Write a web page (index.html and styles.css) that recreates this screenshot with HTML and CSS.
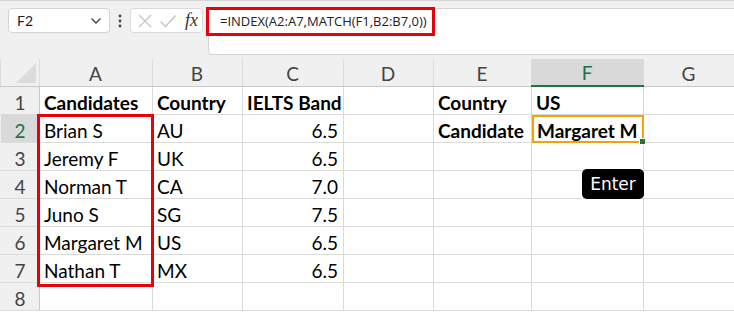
FILE: index.html
```html
<!DOCTYPE html>
<html>
<head>
  <title>INDEX MATCH</title>
  <link rel="stylesheet" href="styles.css">
</head>
<body>
  <div class="toolbar">
    <div class="name-box">
      <span>F2</span>
      <svg width="12" height="8" viewBox="0 0 12 8"><path d="M1.5 1.5 L6 6 L10.5 1.5" fill="none" stroke="#444" stroke-width="1.4"/></svg>
    </div>
    <div class="dots">
      <svg width="4" height="14" viewBox="0 0 4 14"><circle cx="2" cy="2" r="1.4" fill="#444"/><circle cx="2" cy="7" r="1.4" fill="#444"/><circle cx="2" cy="12" r="1.4" fill="#444"/></svg>
    </div>
    <div class="fx-box">
      <svg width="16" height="16" viewBox="0 0 16 16"><path d="M2 2 L14 14 M14 2 L2 14" stroke="#c4c4c4" stroke-width="1.3"/></svg>
      <svg width="18" height="16" viewBox="0 0 18 16"><path d="M1.5 8.5 L6.5 13.5 L16.5 2.5" fill="none" stroke="#c4c4c4" stroke-width="1.3"/></svg>
      <span class="fx">fx</span>
    </div>
    <div class="formula">
      <span class="formula-text">=INDEX(A2:A7,MATCH(F1,B2:B7,0))</span>
    </div>
  </div>

  <div class="sheet">
    <table class="grid">
      <colgroup>
        <col style="width:39px">
        <col style="width:113px">
        <col style="width:90px">
        <col style="width:101px">
        <col style="width:90px">
        <col style="width:98px">
        <col style="width:112px">
        <col style="width:91px">
      </colgroup>
      <tr class="col-head">
        <th class="corner"><div class="tri"></div></th>
        <th>A</th><th>B</th><th>C</th><th>D</th><th>E</th><th class="sel">F</th><th>G</th>
      </tr>
      <tr>
        <th class="row-head">1</th>
        <td class="b">Candidates</td><td class="b">Country</td><td class="b">IELTS Band</td><td></td>
        <td class="b">Country</td><td class="b">US</td><td></td>
      </tr>
      <tr>
        <th class="row-head sel">2</th>
        <td>Brian S</td><td>AU</td><td class="num">6.5</td><td></td>
        <td class="b">Candidate</td><td class="b active">Margaret M<span class="handle"></span></td><td></td>
      </tr>
      <tr>
        <th class="row-head">3</th>
        <td>Jeremy F</td><td>UK</td><td class="num">6.5</td><td></td><td></td><td></td><td></td>
      </tr>
      <tr>
        <th class="row-head">4</th>
        <td>Norman T</td><td>CA</td><td class="num">7.0</td><td></td><td></td><td></td><td></td>
      </tr>
      <tr>
        <th class="row-head">5</th>
        <td>Juno S</td><td>SG</td><td class="num">7.5</td><td></td><td></td><td></td><td></td>
      </tr>
      <tr>
        <th class="row-head">6</th>
        <td>Margaret M</td><td>US</td><td class="num">6.5</td><td></td><td></td><td></td><td></td>
      </tr>
      <tr>
        <th class="row-head">7</th>
        <td>Nathan T</td><td>MX</td><td class="num">6.5</td><td></td><td></td><td></td><td></td>
      </tr>
      <tr>
        <th class="row-head">8</th>
        <td></td><td></td><td></td><td></td><td></td><td></td><td></td>
      </tr>
    </table>
    <div class="range-mark"></div>
    <div class="enter-key">Enter</div>
  </div>
</body>
</html>
```

FILE: styles.css
```css
body {
  margin: 0;
  width: 734px;
  height: 314px;
  overflow: hidden;
  background: #ffffff;
  font-family: Lato, "Liberation Sans", sans-serif;
}

.toolbar {
  display: flex;
  align-items: flex-start;
  height: 59px;
  padding: 7px 0 0 8px;
  box-sizing: border-box;
  background: #f0f0f0;
  border-top: 1px solid #d6d6d6;
}

.name-box {
  display: flex;
  align-items: center;
  justify-content: space-between;
  width: 102px;
  height: 25px;
  padding: 0 7px 0 8px;
  box-sizing: border-box;
  background: #ffffff;
  border: 1px solid #d4d4d4;
  border-radius: 4px;
  font-size: 14px;
  color: #222;
}

.dots {
  width: 20px;
  height: 25px;
  display: flex;
  align-items: center;
  justify-content: center;
}

.fx-box {
  display: flex;
  align-items: center;
  gap: 6px;
  width: 73px;
  height: 25px;
  padding: 0 4px 0 6px;
  box-sizing: border-box;
  background: #ffffff;
  border: 1px solid #dadada;
  border-radius: 4px;
}

.fx {
  font-family: "Liberation Serif", serif;
  font-style: italic;
  font-size: 18px;
  color: #333;
  margin-left: 2px;
}

.formula {
  flex: 1;
  height: 45px;
  margin-left: 5px;
  background: #ffffff;
  border: 1px solid #d4d4d4;
  border-right: none;
  border-radius: 4px 0 0 4px;
  font-family: "Open Sans", sans-serif;
  font-size: 13px;
  color: #222;
}

.formula-text {
  display: inline-block;
  margin: -2px 0 0 -3px;
  padding: 2px 5px 3px 11px;
  border: 3px solid #e8000b;
}

.sheet {
  position: relative;
}

.grid {
  table-layout: fixed;
  border-collapse: collapse;
  width: 734px;
  font-size: 19px;
  line-height: 21px;
  color: #000;
}

.grid td,
.grid th {
  height: 26px;
  padding: 0 5px 1px 4px;
  border: 1px solid #dadada;
  vertical-align: bottom;
  white-space: nowrap;
  overflow: visible;
  text-align: left;
  font-weight: normal;
}

.grid .col-head th {
  height: 24px;
  background: #f0f0f0;
  color: #444;
  text-align: center;
  border-color: #f0f0f0 #dcdcdc #c8c8c8 #dcdcdc;
  border-top: none;
  padding-bottom: 2px;
}

.grid .col-head th.sel {
  background: #d9d9d9;
  color: #217346;
  border-bottom: 2px solid #217346;
}

.grid .corner {
  position: relative;
  padding: 0;
}

.tri {
  position: absolute;
  right: 3px;
  bottom: 3px;
  width: 0;
  height: 0;
  border-left: 20px solid transparent;
  border-bottom: 20px solid #dcdcdc;
}

.grid th.row-head {
  background: #f0f0f0;
  color: #444;
  text-align: center;
  padding: 0 0 1px 0;
  border-color: #dcdcdc #c8c8c8 #dcdcdc #f0f0f0;
}

.grid th.row-head.sel {
  background: #d9d9d9;
  color: #217346;
}

.grid td.b {
  font-weight: bold;
}

.grid td.num {
  text-align: right;
}

.grid td.active {
  position: relative;
  outline: 2px solid #f2a20c;
  outline-offset: -2px;
  padding-left: 5px;
}

.handle {
  position: absolute;
  right: -3px;
  bottom: -3px;
  width: 5px;
  height: 5px;
  background: #217346;
  border: 1px solid #ffffff;
}

.range-mark {
  position: absolute;
  left: 37px;
  top: 55px;
  width: 111px;
  height: 167px;
  border: 3px solid #e8000b;
}

.enter-key {
  position: absolute;
  left: 582px;
  top: 110px;
  width: 62px;
  height: 30px;
  box-sizing: border-box;
  background: #000;
  color: #fff;
  border-radius: 5px;
  font-family: "DejaVu Sans", sans-serif;
  font-size: 17px;
  text-align: center;
  line-height: 30px;
}
```
